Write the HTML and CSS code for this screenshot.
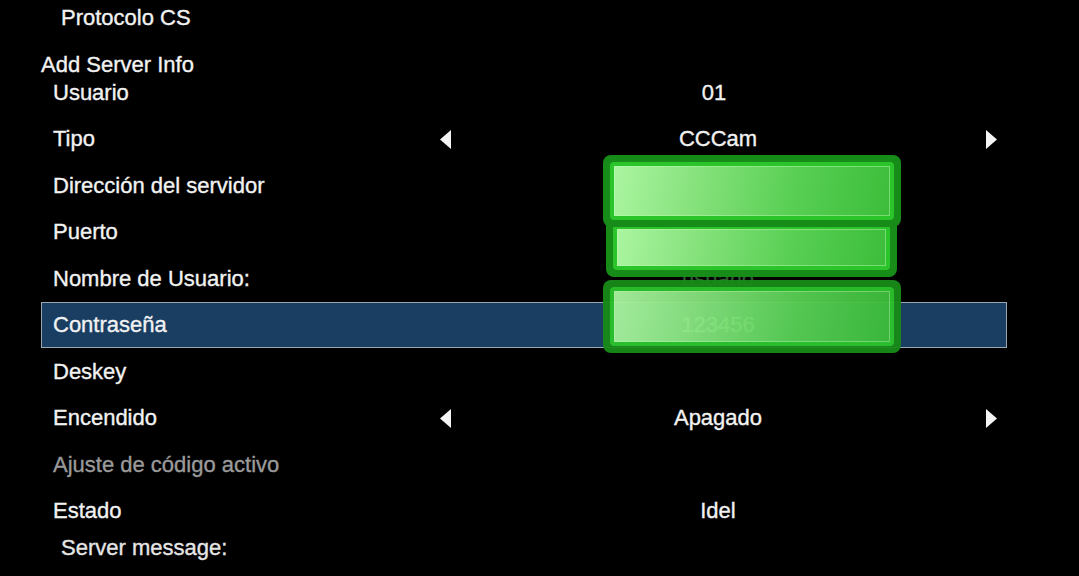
FILE: index.html
```html
<!DOCTYPE html>
<html lang="es">
<head>
    <meta charset="UTF-8">
    <title>Protocolo CS</title>
    <link rel="stylesheet" href="styles.css">
</head>
<body>
    <div class="screen">
        <div class="page-title">Protocolo CS</div>
        <div class="section-title">Add Server Info</div>

        <div class="menu">
            <div class="row">
                <span class="label">Usuario</span>
                <span class="arrow"></span>
                <span class="value value-short">01</span>
                <span class="arrow"></span>
            </div>
            <div class="row">
                <span class="label">Tipo</span>
                <span class="arrow"><svg width="11" height="19" viewBox="0 0 11 19"><path d="M11 0V19L0 9.5Z" fill="#f4f4f4"/></svg></span>
                <span class="value">CCCam</span>
                <span class="arrow"><svg width="11" height="19" viewBox="0 0 11 19"><path d="M0 0V19L11 9.5Z" fill="#f4f4f4"/></svg></span>
            </div>
            <div class="row">
                <span class="label">Dirección del servidor</span>
                <span class="arrow"></span>
                <span class="value">192.168.1.1</span>
                <span class="arrow"></span>
            </div>
            <div class="row">
                <span class="label">Puerto</span>
                <span class="arrow"></span>
                <span class="value">12000</span>
                <span class="arrow"></span>
            </div>
            <div class="row">
                <span class="label">Nombre de Usuario:</span>
                <span class="arrow"></span>
                <span class="value value-hidden">usuario</span>
                <span class="arrow"></span>
            </div>
            <div class="row active">
                <span class="label">Contraseña</span>
                <span class="arrow"></span>
                <span class="value">123456</span>
                <span class="arrow"></span>
            </div>
            <div class="row">
                <span class="label">Deskey</span>
                <span class="arrow"></span>
                <span class="value"></span>
                <span class="arrow"></span>
            </div>
            <div class="row">
                <span class="label">Encendido</span>
                <span class="arrow"><svg width="11" height="19" viewBox="0 0 11 19"><path d="M11 0V19L0 9.5Z" fill="#f4f4f4"/></svg></span>
                <span class="value">Apagado</span>
                <span class="arrow"><svg width="11" height="19" viewBox="0 0 11 19"><path d="M0 0V19L11 9.5Z" fill="#f4f4f4"/></svg></span>
            </div>
            <div class="row disabled">
                <span class="label">Ajuste de código activo</span>
                <span class="arrow"></span>
                <span class="value"></span>
                <span class="arrow"></span>
            </div>
            <div class="row">
                <span class="label">Estado</span>
                <span class="arrow"></span>
                <span class="value">Idel</span>
                <span class="arrow"></span>
            </div>
        </div>

        <div class="server-msg">Server message:</div>

        <!-- green blocks covering the value column -->
        <div class="block block-mid"><div class="block-inner"></div></div>
        <div class="block block-top"><div class="block-inner"></div></div>
        <div class="block block-bottom"><div class="block-inner"></div></div>
    </div>
</body>
</html>
```

FILE: styles.css
```css
* {
    margin: 0;
    padding: 0;
    box-sizing: border-box;
}

body {
    background-color: #000;
    color: #f2f2f2;
    font-family: "Liberation Sans", Arial, sans-serif;
    font-size: 22px;
    -webkit-text-stroke: 0.35px currentColor;
    overflow: hidden;
}

.screen {
    position: relative;
    width: 1079px;
    height: 576px;
}

.page-title {
    padding-left: 61px;
    line-height: 36px;
}

.section-title {
    margin-top: 16px;
    padding-left: 41px;
    line-height: 26px;
}

.menu {
    margin-top: -8.2px;
    margin-left: 41px;
    width: 966px;
}

.row {
    display: grid;
    grid-template-columns: 391px 24px 522px 24px 3px;
    align-items: center;
    height: 46.44px;
    border: 1px solid transparent;
}

.row.active {
    background-color: #1a3d62;
    border-color: #9ca6b0;
}

.row.disabled {
    color: #9a9a9a;
}

.label {
    padding-left: 11px;
    white-space: nowrap;
}

.arrow {
    display: flex;
    justify-content: center;
    align-items: center;
}

.value {
    text-align: center;
}

.value-short {
    padding-right: 8px;
}

.value-hidden {
    color: #2f5a2f;
}

.server-msg {
    padding-left: 61px;
    line-height: 28px;
    color: #e6e6e6;
}

.block {
    position: absolute;
    background-color: #188c18;
    border-radius: 8px;
    padding: 7px;
}

.block-inner {
    height: 100%;
    border: 4px solid #2bc42b;
    border-radius: 4px;
    background: linear-gradient(100deg, #abf5a1 0%, #86e27c 30%, #58cf53 65%, #3cbd3a 100%);
    box-shadow: inset 0 0 0 1px rgba(190, 255, 180, 0.45);
}

.block-top {
    left: 603px;
    top: 155px;
    width: 298px;
    height: 72px;
}

.block-mid {
    left: 606px;
    top: 218px;
    width: 291px;
    height: 59px;
}

.block-bottom {
    left: 603px;
    top: 280px;
    width: 298px;
    height: 73px;
    opacity: 0.95;
}
```
